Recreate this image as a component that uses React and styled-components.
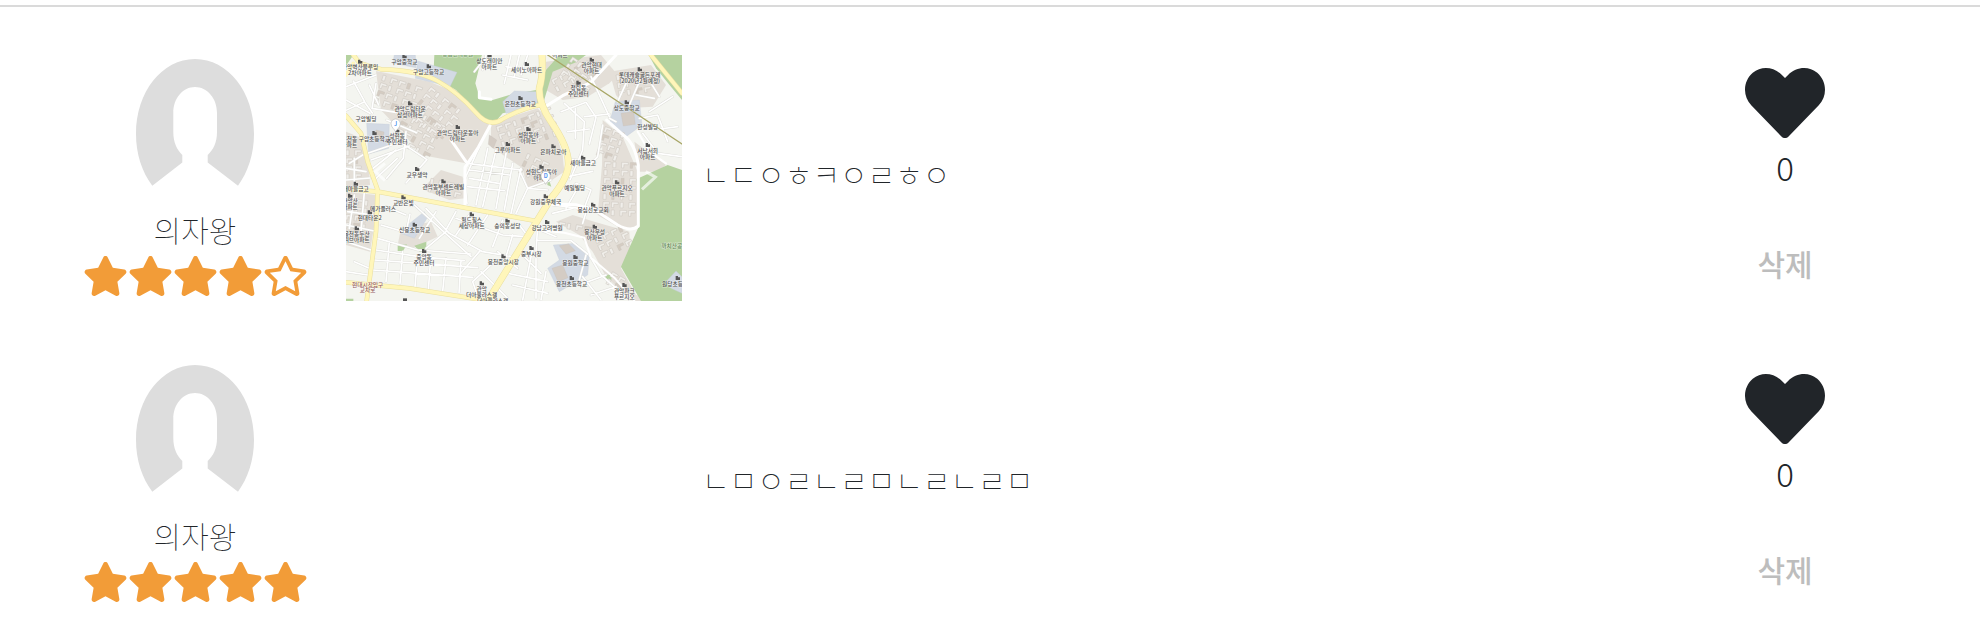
import React from "react";
import styled, { createGlobalStyle } from "styled-components";
import { FaHeart, FaRegStar, FaStar } from "react-icons/fa";

const GlobalStyle = createGlobalStyle`
  * { box-sizing: border-box; }
  body {
    margin: 0;
    background: #fff;
    color: #212529;
    font-family: "Noto Sans CJK KR", sans-serif;
    font-size: 30px;
    font-weight: 100;
  }
`;

const Page = styled.main`
  height: 622px;
  overflow: hidden;
  padding-top: 5px;
`;

const Divider = styled.hr`
  height: 2px;
  margin: 0 0 15px;
  border: 0;
  background: #dadada;
`;

const Review = styled.article`
  display: grid;
  grid-template-columns: 262px 336px 1fr 240px;
  column-gap: 24px;
  height: 306px;
  padding: 0 75px 0 60px;
`;

const Author = styled.div`
  display: flex;
  flex-direction: column;
  align-items: center;
  width: 270px;
  padding-top: 37px;
`;

const Avatar = styled.svg`
  display: block;
  width: 118px;
  height: 150px;
`;

const Name = styled.div`
  height: 47px;
  line-height: 41px;
`;

const Rating = styled.div`
  display: flex;
  color: #f29c38;

  svg {
    display: block;
    width: 45px;
    height: 40px;
  }
`;

const Photo = styled.div`
  width: 336px;
  height: 246px;
  margin-top: 33px;

  svg {
    display: block;
    width: 100%;
    height: 100%;
  }
`;

const Comment = styled.p`
  margin: 129px 0 0 -4px;
  line-height: 45px;
`;

const Actions = styled.div`
  display: flex;
  flex-direction: column;
  align-items: center;
  padding-top: 41px;

  svg {
    display: block;
    width: 80px;
    height: 80px;
  }
`;

const Likes = styled.span`
  height: 98px;
  line-height: 48px;
  font-size: 33px;
  font-weight: 300;
`;

const DeleteButton = styled.button`
  padding: 0;
  border: 0;
  background: none;
  color: #bdbdbd;
  font: 500 30px/45px "Noto Sans CJK KR", sans-serif;
`;

const MapText = styled.text`
  font: 500 17px "Noto Sans CJK KR", sans-serif;
  text-anchor: middle;
  fill: ${(p) => p.$fill || "#505050"};
  stroke: #fff;
  stroke-width: 3px;
  stroke-opacity: 0.5;
  paint-order: stroke;
`;

/* [x, y of first line, lines, has marker] */
const PLACES = [
  [175, 27, ["구암중학교"], 1], [248, 57, ["구암고등학교"], 1],
  [42, 43, ["관악벽산블루밍", "2차아파트"], 1], [430, 24, ["상도래미안", "아파트"], 1],
  [542, 50, ["세이노아파트"], 1], [737, 37, ["관악현대", "아파트"], 1],
  [697, 106, ["청림동", "주민센터"], 1], [881, 66, ["롯데캐슬골든포레", "(2020년2월예정)"], 1],
  [523, 152, ["은천초등학교"], 1], [842, 165, ["상도중학교"], 1],
  [192, 168, ["관악드림타운", "삼성아파트"], 1], [60, 198, ["구암빌딩"], 0],
  [85, 257, ["구암초등학교"], 1], [153, 249, ["성현동", "주민센터"], 1],
  [10, 257, ["봉천동", "아파트"], 0], [335, 239, ["관악드림타운동아", "아파트"], 1],
  [547, 245, ["성현동아", "아파트"], 1], [485, 290, ["그루아파트"], 1],
  [622, 297, ["은파치로아"], 1], [586, 358, ["성현드림동아", "아파트"], 1],
  [905, 222, ["한성빌딩"], 0], [905, 293, ["서남서희", "아파트"], 1],
  [711, 331, ["새마을금고"], 1], [686, 406, ["예일빌딩"], 0],
  [813, 405, ["관악푸르지오", "아파트"], 1], [213, 365, ["교우생약"], 1],
  [292, 402, ["관악동부센트레빌", "아파트"], 1], [29, 409, ["새마을금고"], 1],
  [172, 450, ["교반은빛"], 1], [111, 467, ["메가플러스"], 0],
  [71, 495, ["현대타운2"], 1], [12, 445, ["관악산", "아파트"], 1],
  [32, 543, ["봉천동두산", "위브아파트"], 1], [206, 532, ["신봉초등학교"], 1],
  [377, 501, ["월드힐스", "세상아파트"], 1], [484, 520, ["숭의동성당"], 1],
  [599, 447, ["강원중우체국"], 1], [603, 524, ["강남고려병원"], 1],
  [741, 472, ["봉심선로교회"], 1], [746, 538, ["봉산우성", "아파트"], 1],
  [556, 602, ["중부시장"], 1], [234, 611, ["중앙동", "주민센터"], 1],
  [472, 627, ["봉천중앙시장"], 1], [688, 629, ["봉원중학교"], 1],
  [677, 692, ["봉천초등학교"], 1], [835, 713, ["관악파크", "푸르지오"], 1],
  [995, 692, ["원당초등학교"], 1], [407, 708, ["관악", "더아울라스갤"], 1],
];

const STREETS = [
  "M0 95L90 60M22 78l34 62-56 26M90 85L78 160 150 172M70 90l28 60M0 135l72 40M55 140l24 34",
  "M65 295l100-35M75 315l115-42M75 345l75-60M90 370l64-60M180 230l-8 80-50 60M165 262l78 52-63 70M122 195l90 38",
  "M362 325l165 20M370 345l120 15M370 370l92 16M365 395l110 12M400 275l-45 100 8 70M425 280l-35 170M450 285l-40 170M480 295l-30 165M500 325l-25 140M525 340l-30 135M520 345l25 55 70-25M545 400l60 5M545 400l-35 75",
  "M655 145l60 55-5 85-38 90M645 170l75-28 30 45-20 80M665 230l65-8M688 160v90M672 312l75 12M665 365l75-16M735 65l55 120M715 185l75-8M770 210l-15 95-20 20",
  "M120 455l60 25M105 510l75 22 12-55M95 550l120 35 160 12M90 585l130 20 135 12M85 615l310 23M80 645l300 22M130 560l-10 120M170 590l-8 95M215 605l-8 90M255 600l-8 105M300 610l-10 100M345 617l-6 97",
  "M240 460l70 75 100 55 90 15M205 450l170 155M270 470l-50 80M330 470l-30 55M300 530l-60 50M330 490l140 50 70 5M370 480l-40 60M425 480l-60 90M470 495l-30 80M400 590l-60 70M500 540l-20 65M520 510l30 40",
  "M575 515l-5 75M570 555l105 2 50 40M560 580l-30 155M530 600l55 55M485 655l120 25M500 690l105 25M570 610v120M600 650l-15 85M440 625l-60 55 20 57M405 650l80 80M455 590l60 50",
  "M700 390l-40 70M690 385l45 20-18 48M725 455l-15 50M620 450l80 10M620 475l60-15M730 600l35 60 80 70M710 665l55 70M700 690l80-30M735 720l75-25M720 600l-20 75M630 545l-60-25",
  "M840 85l-25 55M880 80l-30 70M900 60l40 65M880 190l55-10 30 80M890 235l45 60 73 10M920 225l75-10M910 170l70-45M870 120l55 10M790 190l20 10",
  "M5 470l75 10M25 420l-15 100M55 410l-10 120M0 510l85 18M0 560l75 25M25 620l45 20M0 650l65 10M50 300l-40 25M0 340l60 10M25 310v80M0 375l72-6",
  "M405 25l-20 25M495 0l-20 85M520 0l-15 65M545 0l-20 60M480 35l80 15M470 60l75 15M420 0l-10 45",
];

const ESTATES = [
  "M90 48L250 80 345 118 430 210 405 265 360 325 225 300 180 245 105 165z",
  "M240 390L285 345 350 365 358 430 310 435 235 405z",
  "M435 205L575 160 622 210 650 300 655 350 610 380 545 405 530 340 435 275z",
  "M600 20L765 0 815 60 790 85 725 125 650 135 600 105z",
  "M790 50L915 30 960 90 920 155 840 160 810 120z",
  "M770 195L830 245 875 350 878 515 830 525 755 480 768 330z",
  "M0 230L48 250 68 320 72 390 0 400z",
  "M0 410L90 420 85 510 72 590 0 570z",
  "M630 500L680 480 745 500 850 530 855 600 825 640 870 720 1008 738H860L780 665 740 590 700 540z",
  "M165 520L255 500 275 545 200 580 155 570z",
  "M865 260L960 330 935 350 880 350z",
];

/* [x, y, columns, rows, rotation] of apartment blocks */
const BLOCKS = [
  [112, 60, 5, 4, 18], [190, 155, 5, 5, 28], [255, 95, 5, 5, 38],
  [255, 370, 4, 2, 12], [450, 215, 4, 3, -18], [545, 180, 3, 4, -20],
  [545, 295, 3, 3, 25], [615, 75, 5, 2, -28], [680, 5, 4, 3, 35],
  [810, 60, 4, 3, -8], [778, 215, 3, 4, 18], [775, 320, 4, 7, 2],
  [0, 285, 2, 4, 0], [5, 430, 3, 5, 6], [640, 500, 4, 1, 10],
  [745, 550, 4, 3, -25], [800, 650, 2, 2, 30],
];

function Blocks() {
  return BLOCKS.map(([x, y, cols, rows, angle], n) => (
    <g key={n} transform={`translate(${x} ${y}) rotate(${angle})`}>
      {Array.from({ length: cols * rows }, (_, i) => {
        const cx = (i % cols) * 26;
        const cy = Math.floor(i / cols) * 24;
        const wide = (i + n) % 3;
        return (
          <path
            key={i}
            d={wide ? `M${cx} ${cy}h20v7h-13v10h-7z` : `M${cx} ${cy}h9v17h-9z`}
            fill={i % 7 === 3 ? "#d5ccc2" : "#f0eeea"}
            stroke="#cbc5bd"
            strokeWidth="1.5"
          />
        );
      })}
    </g>
  ));
}

function Pin({ x, y, label }) {
  return (
    <g>
      <path
        d={`M${x} ${y + 24}c-3-9-14-13-14-25a14 14 0 0 1 28 0c0 12-11 16-14 25z`}
        fill="#fff"
        stroke="#aaa"
        strokeWidth="1.5"
      />
      <MapText x={x} y={y + 6} $fill="#287bea">{label}</MapText>
    </g>
  );
}

function NeighborhoodMap() {
  return (
    <svg viewBox="0 0 1008 738" preserveAspectRatio="none">
      <rect width="1008" height="738" fill="#f4f5f0" />
      <g fill="#e4dfd8">
        {ESTATES.map((d) => <path key={d} d={d} />)}
      </g>
      <g fill="#b5d2a0">
        <path d="M265 0H408L400 35 388 85 400 125 440 135 490 120 570 105 600 45 640 0H720L690 22 620 50 590 150 470 175 440 210 400 185 330 105 262 65z" />
        <path d="M908 0H1008V135L975 95 930 40z" />
        <path d="M1008 345L965 330 872 372 878 515 825 635 885 738H1008z" />
        <path d="M0 0H22L0 32zM155 572l28-4-12 20h-16zM205 572l36-12v30h-20zM606 365l10 30-12-5zM778 662q20-10 18 12l-8 10q-12-8-10-22zM0 731h22v7H0z" />
      </g>
      <path d="M408 0H575L590 60 520 108 440 132 405 128 478 85 400 40z" fill="#f4f5f0" />
      <g fill="#d3dae4" stroke="#c3cbd8">
        <path d="M145 0H208L210 38 140 25zM215 18L333 52 312 95 208 70zM62 205L130 208 128 280 68 297zM470 140L505 108 572 110 575 155 480 175z" />
        <path d="M808 140L880 135 888 210 840 245 790 205zM185 510L235 470 243 490 205 550 165 535zM605 640L640 615 622 570 690 565 730 605 725 660 640 710zM960 680L990 648 1008 665V715L975 700z" />
      </g>
      <g fill="#d4ccc4" stroke="#c5beb8">
        <path d="M90 225l24 6-4 25-25-6zM825 175l38-5 5 38-36 5zM618 640l32-10 16 38-30 12zM640 572l28-5 20 20-28 10zM430 240l22 15-10 25-15-12z" />
      </g>
      <Blocks />
      <g fill="none" strokeLinejoin="round" strokeLinecap="round">
        {STREETS.map((d) => <path key={`${d}e`} d={d} stroke="#deded9" strokeWidth="7.5" />)}
        {STREETS.map((d) => <path key={d} d={d} stroke="#fff" strokeWidth="5" />)}
        <g stroke="#fff" strokeWidth="9">
          <path d="M590 160l60-38 85-40 75-82M610 447l80 2 60 18 65 43q40 22 62 3V330q-10-65-45-90l-50-45M432 212l-35 65-40 60v115M315 255l45 65M400 110v18l35 5" />
          <path d="M575 525l80 8 60 15 20 60 70 60 60 70M875 230l35 60 50 35" strokeWidth="6" />
        </g>
        <g stroke="#e9dfa0">
          <path d="M22 0L42 25 105 43Q215 45 275 78T390 173Q430 220 470 192 530 158 592 148" strokeWidth="14" />
          <path d="M588 0Q592 60 580 100 578 145 615 200 670 280 667 330 665 370 615 430L425 738" strokeWidth="21" />
          <path d="M0 182L45 235 65 320 95 405 90 530 62 738M0 402L95 410 570 498M0 682L190 700 430 738M915 0L1008 115" strokeWidth="14" />
        </g>
        <g stroke="#fff6ba">
          <path d="M22 0L42 25 105 43Q215 45 275 78T390 173Q430 220 470 192 530 158 592 148" strokeWidth="11" />
          <path d="M588 0Q592 60 580 100 578 145 615 200 670 280 667 330 665 370 615 430L425 738" strokeWidth="18" />
          <path d="M0 182L45 235 65 320 95 405 90 530 62 738M0 402L95 410 570 498M0 682L190 700 430 738M915 0L1008 115M0 60L22 25" strokeWidth="11" />
        </g>
        <path d="M605 0L1008 267" stroke="#a7a565" strokeWidth="4" />
      </g>
      {PLACES.map(([x, y, lines, marked]) => (
        <g key={`${x}-${y}`}>
          {marked ? <path d={`M${x - 6} ${y - 17}v-12h7v4h6v8z`} fill="#555" /> : null}
          {lines.map((line, i) => <MapText key={line} x={x} y={y + i * 18}>{line}</MapText>)}
        </g>
      ))}
      <MapText x="335" y="3" $fill="#6f9564">청림현대공원</MapText>
      <MapText x="642" y="6">아파트</MapText>
      <MapText x="985" y="580" $fill="#5f8455">까치산공원</MapText>
      <MapText x="65" y="697" $fill="#935b60">현대시장입구</MapText>
      <MapText x="65" y="712" $fill="#935b60">교차로</MapText>
      <MapText x="440" y="743">더아울라스갤</MapText>
      <path d="M171 738v-8h12v8" fill="#555" />
      <Pin x={149} y={207} label="J" />
      <Pin x={599} y={364} label="D" />
      <g fill="none" stroke="#fff" strokeWidth="9" opacity=".65">
        <path d="M117 325L88 350 117 377" />
        <path d="M888 403L928 366 899 350" />
      </g>
    </svg>
  );
}

function ProfileImage() {
  return (
    <Avatar viewBox="0 0 118 150">
      <path
        d="M16.3 126.7C6 113 0 95 0 75 0 33 26 0 59 0s59 33 59 75c0 20-6 38-16 51.7L71.7 103.5V96C77 91 81 84 81 73V54C81 39 71 28 59 28S37.3 39 37.3 54v19c0 11 4 18 9 23v7.5z"
        fill="#ddd"
      />
    </Avatar>
  );
}

function ReviewItem({ name, rating, comment, likes, photo }) {
  return (
    <Review>
      <Author>
        <ProfileImage />
        <Name>{name}</Name>
        <Rating>
          {[1, 2, 3, 4, 5].map((n) => (n <= rating ? <FaStar key={n} /> : <FaRegStar key={n} />))}
        </Rating>
      </Author>
      <Photo>{photo}</Photo>
      <Comment>{comment}</Comment>
      <Actions>
        <FaHeart />
        <Likes>{likes}</Likes>
        <DeleteButton>삭제</DeleteButton>
      </Actions>
    </Review>
  );
}

export default function App() {
  return (
    <>
      <GlobalStyle />
      <Page>
        <Divider />
        <ReviewItem name="의자왕" rating={4} comment="ㄴㄷㅇㅎㅋㅇㄹㅎㅇ" likes={0} photo={<NeighborhoodMap />} />
        <ReviewItem name="의자왕" rating={5} comment="ㄴㅁㅇㄹㄴㄹㅁㄴㄹㄴㄹㅁ" likes={0} />
      </Page>
    </>
  );
}
